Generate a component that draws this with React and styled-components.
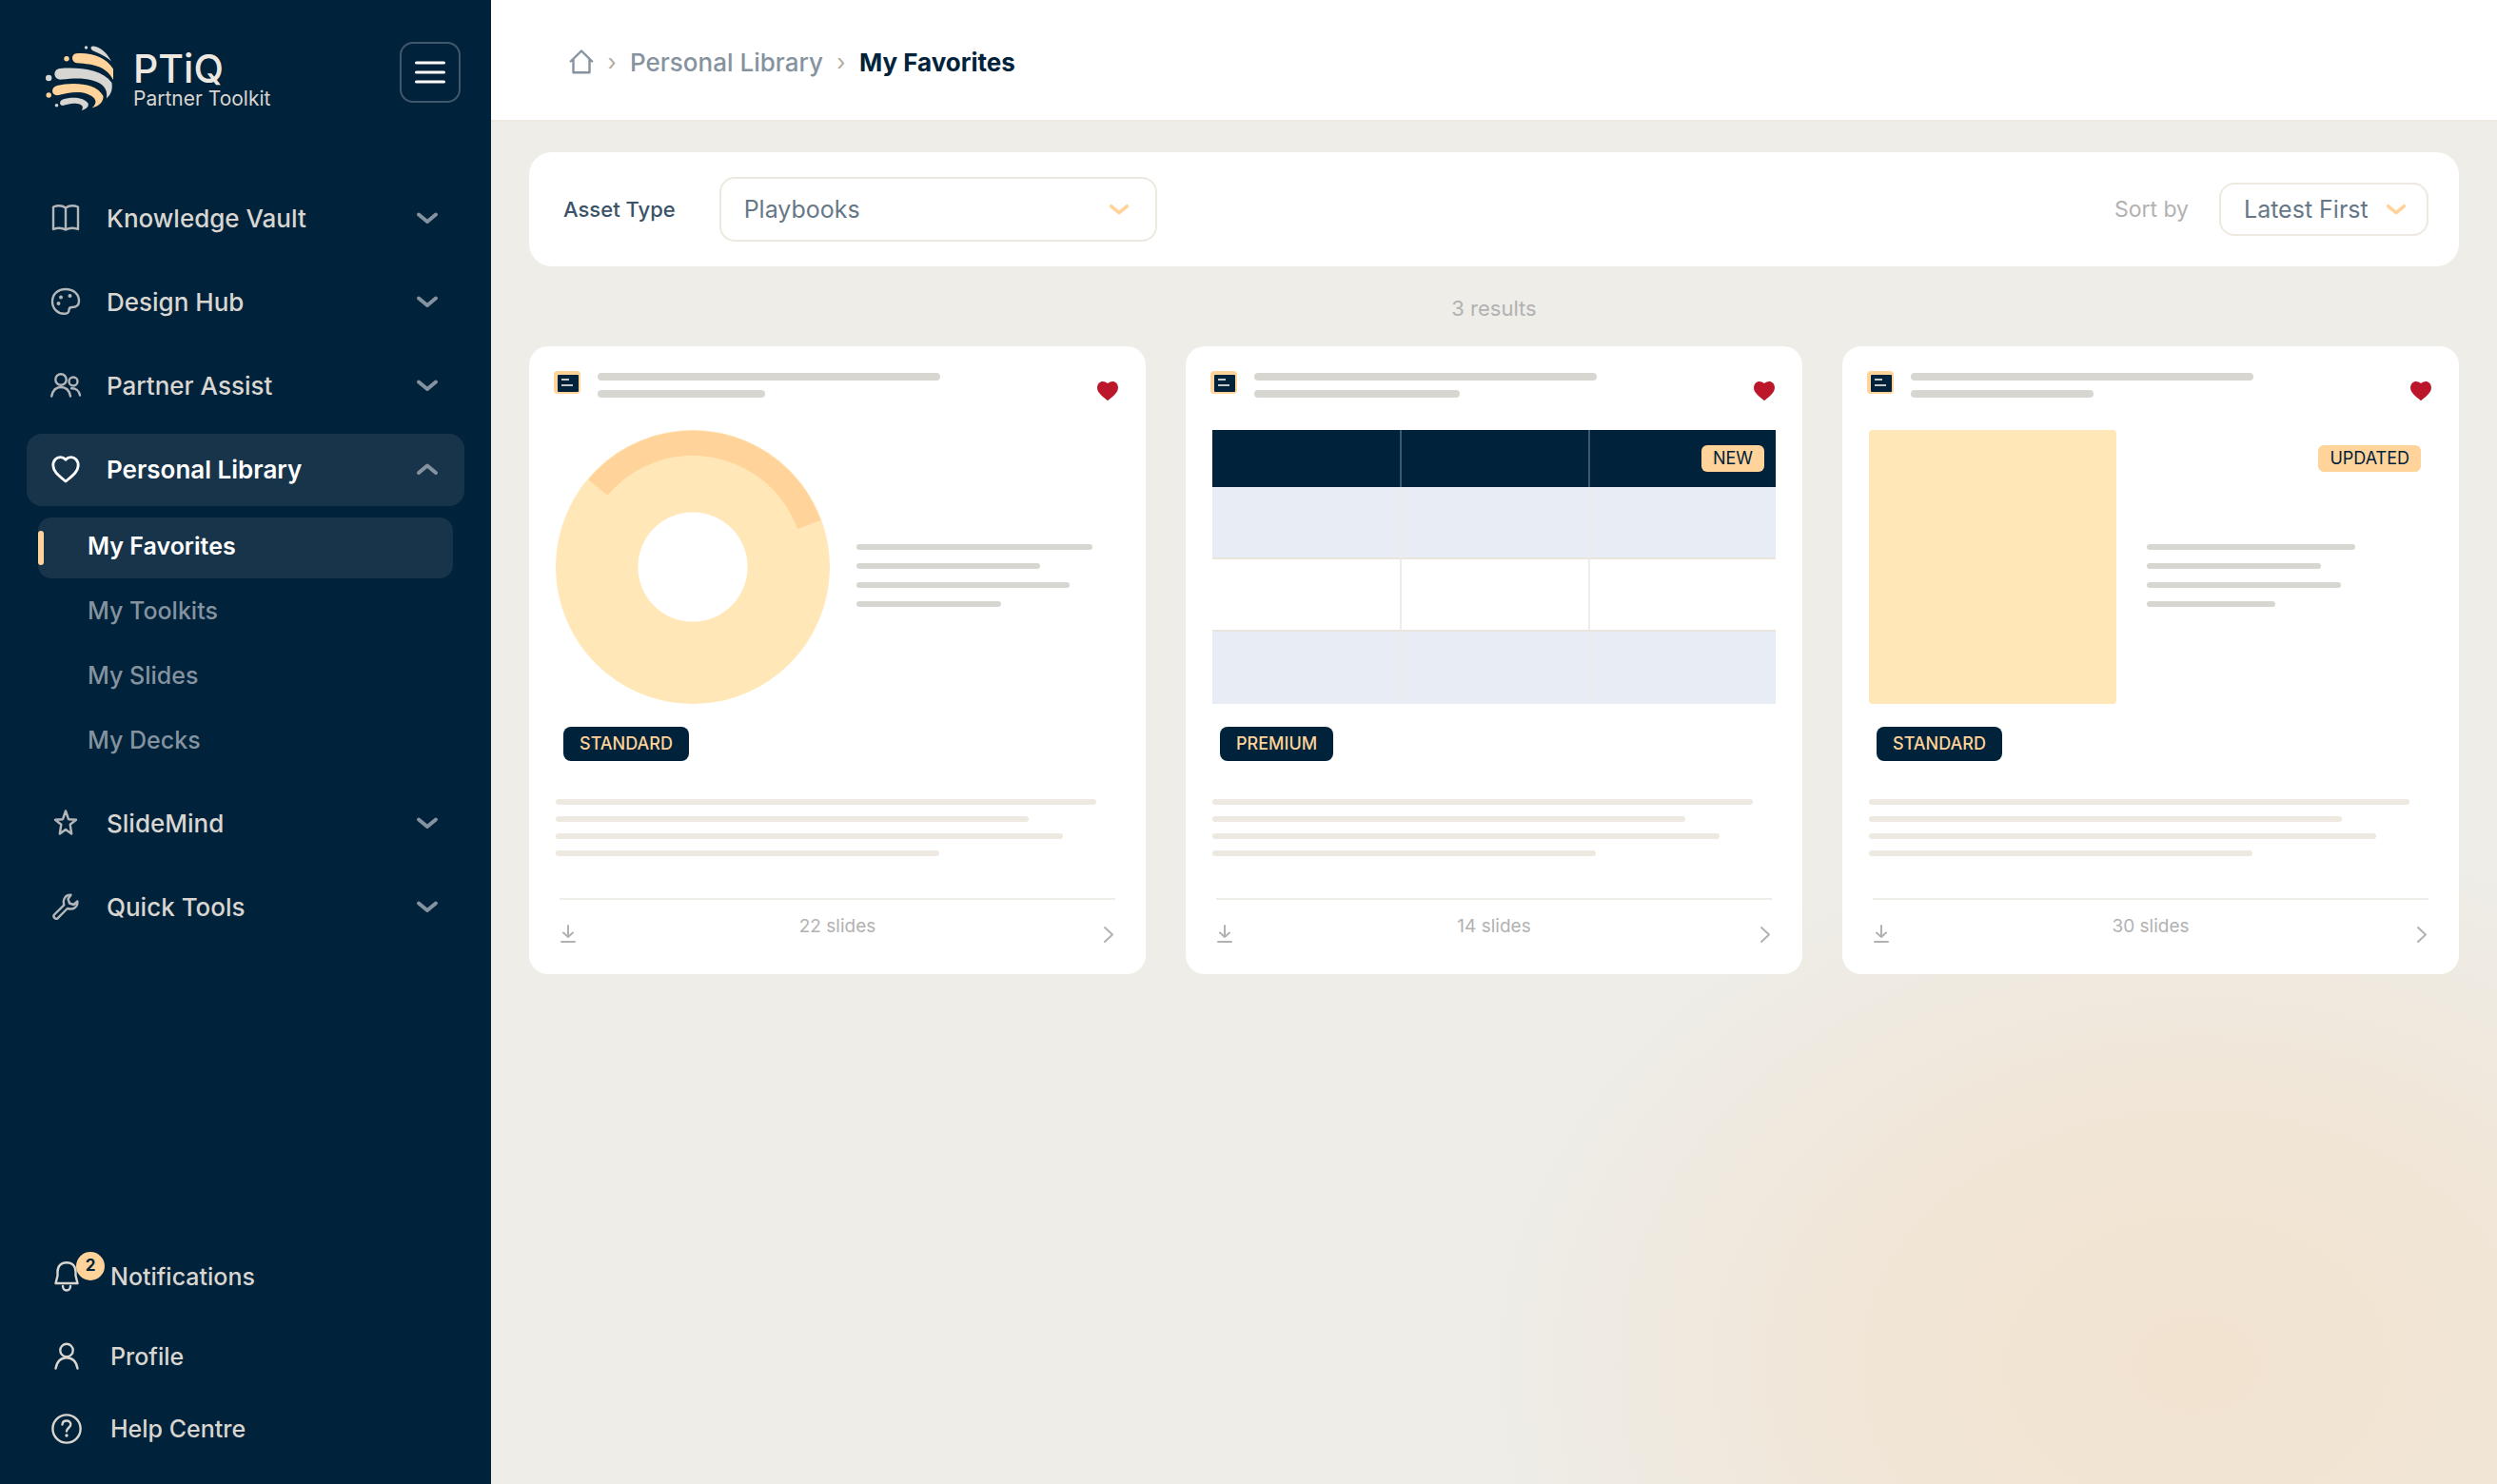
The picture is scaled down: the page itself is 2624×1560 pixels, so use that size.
import React, { useState } from 'react';
import styled, { createGlobalStyle } from 'styled-components';

const navy = '#00223a';
const peach = '#ffd399';
const cream = '#ffe7b7';
const sand = '#eeede8';
const line = '#eee9e0';
const bar = '#d7d6d1';

const GlobalStyle = createGlobalStyle`
  * {
    box-sizing: border-box;
  }

  body {
    margin: 0;
    background-color: ${sand};
    font-family: Inter, 'Open Sans', sans-serif;
    font-size: 24px;
    color: ${navy};
  }

  button, select {
    font: inherit;
    color: inherit;
    background: none;
    border: none;
    margin: 0;
    padding: 0;
    cursor: pointer;
  }

  a {
    color: inherit;
    text-decoration: none;
  }

  svg {
    display: block;
    flex-shrink: 0;
    fill: none;
    stroke: currentColor;
    stroke-linecap: round;
    stroke-linejoin: round;
  }
`;

const Page = styled.div`
  display: flex;
  min-height: 100vh;
`;

const Sidebar = styled.aside`
  display: flex;
  flex-direction: column;
  flex-shrink: 0;
  width: 516px;
  padding: 44px 28px 28px;
  background-color: ${navy};
  color: #d9d6d2;
`;

const SidebarHeader = styled.div`
  display: flex;
  justify-content: space-between;
  height: 148px;
  padding: 0 4px 0 20px;
`;

const Brand = styled.div`
  display: flex;
  gap: 18px;
  height: 76px;
`;

const BrandName = styled.div`
  padding-top: 6px;
  font-size: 41px;
  line-height: 44px;
  font-weight: 500;
  color: #eee9e0;
`;

const BrandTagline = styled.div`
  font-size: 21px;
  line-height: 20px;
  color: #d9d6d2;
`;

const MenuButton = styled.button`
  display: flex;
  align-items: center;
  justify-content: center;
  width: 64px;
  height: 64px;
  border: 2px solid #40586b;
  border-radius: 14px;
  color: #fff;
`;

const Nav = styled.nav`
  display: flex;
  flex-direction: column;
  gap: 12px;
`;

const NavButton = styled.button`
  display: flex;
  align-items: center;
  gap: 26px;
  width: 100%;
  height: 76px;
  padding: 0 27px 2px 24px;
  border-radius: 16px;
  background-color: ${(props) => (props.$active ? '#17344b' : 'transparent')};
  color: ${(props) => (props.$active ? '#fff' : '#d9d6d2')};
  font-size: 26px;
  font-weight: ${(props) => (props.$active ? 600 : 500)};
  text-align: left;
`;

const NavLabel = styled.span`
  flex: 1;
`;

const NavIcon = styled.span`
  color: ${(props) => (props.$active ? '#fff' : '#b3b7ba')};
`;

const NavChevron = styled.span`
  color: #8592a0;
`;

const SubNav = styled.div`
  display: flex;
  flex-direction: column;
  gap: 4px;
  padding: 12px 12px 4px;
`;

const SubLink = styled.a`
  display: flex;
  align-items: center;
  height: 64px;
  padding-bottom: 4px;
  border-radius: 14px;
  background-color: ${(props) => (props.$active ? '#17344b' : 'transparent')};
  color: ${(props) => (props.$active ? '#fff' : '#8592a0')};
  font-size: 25px;
  font-weight: ${(props) => (props.$active ? 600 : 500)};

  &::before {
    content: '';
    width: 6px;
    height: 36px;
    margin: 4px 46px 0 0;
    border-radius: 3px;
    background-color: ${(props) => (props.$active ? peach : 'transparent')};
  }
`;

const SidebarFooter = styled.div`
  display: flex;
  flex-direction: column;
  gap: 16px;
  margin-top: auto;
`;

const FooterLink = styled.a`
  display: flex;
  align-items: center;
  gap: 30px;
  height: ${(props) => (props.$tall ? 76 : 60)}px;
  padding: 0 26px;
  font-size: 25px;
  font-weight: 500;
`;

const FooterIcon = styled.span`
  position: relative;
`;

const CountBadge = styled.span`
  position: absolute;
  top: -8px;
  right: -24px;
  width: 30px;
  height: 30px;
  border-radius: 50%;
  background-color: ${peach};
  color: ${navy};
  font-size: 17px;
  line-height: 29px;
  font-weight: 700;
  text-align: center;
`;

const Main = styled.main`
  flex: 1;
  min-width: 0;
  background-image: radial-gradient(
    ellipse 36% 37% at 85% 92%,
    #f2e3d0 0%,
    rgba(242, 227, 208, 0.75) 45%,
    rgba(242, 227, 208, 0) 100%
  );
`;

const TopBar = styled.header`
  display: flex;
  align-items: center;
  gap: 16px;
  height: 128px;
  padding: 4px 80px 0 82px;
  border-bottom: 2px solid ${line};
  background-color: #fff;
  color: #8592a0;
`;

const Crumb = styled.a`
  color: ${(props) => (props.$current ? navy : '#8592a0')};
  font-size: 26px;
  font-weight: ${(props) => (props.$current ? 700 : 500)};
`;

const CrumbSeparator = styled.span`
  display: flex;
  justify-content: center;
  width: 6px;
  color: #b5aa9d;
  font-size: 24px;
`;

const Content = styled.div`
  padding: 32px 40px;
`;

const FilterBar = styled.section`
  display: flex;
  align-items: center;
  justify-content: space-between;
  height: 120px;
  padding: 0 32px 0 36px;
  border-radius: 24px;
  background-color: #fff;
`;

const Field = styled.div`
  display: flex;
  align-items: center;
  gap: ${(props) => props.$gap}px;
`;

const FieldLabel = styled.label`
  color: ${(props) => (props.$muted ? '#b2b2b2' : '#3a5368')};
  font-size: ${(props) => (props.$muted ? 23 : 22)}px;
  font-weight: ${(props) => (props.$muted ? 400 : 500)};
`;

const SelectWrap = styled.div`
  display: flex;
  align-items: center;
  position: relative;
  width: ${(props) => props.$width}px;
  height: ${(props) => props.$height}px;
  border: 2px solid ${line};
  border-radius: 16px;
  color: ${peach};

  svg {
    position: absolute;
    right: ${(props) => props.$arrow}px;
    pointer-events: none;
  }
`;

const Select = styled.select`
  width: 100%;
  height: 100%;
  padding: 0 24px;
  appearance: none;
  outline: none;
  color: #667888;
  font-size: 25px;
`;

const ResultCount = styled.p`
  margin: 0;
  height: 84px;
  line-height: 88px;
  text-align: center;
  color: #b2b2b2;
  font-size: 22px;
`;

const CardGrid = styled.div`
  display: grid;
  grid-template-columns: repeat(3, 1fr);
  gap: 42px;
`;

const Card = styled.article`
  position: relative;
  height: 660px;
  padding: 26px 28px;
  border-radius: 20px;
  background-color: #fff;
`;

const CardHeader = styled.div`
  display: flex;
  height: 62px;
`;

const DeckIcon = styled.span`
  width: 28px;
  height: 24px;
  margin: 0 18px 0 -2px;
`;

const TitleBars = styled.div`
  display: flex;
  flex: 0 1 400px;
  flex-direction: column;
  gap: 10px;
  padding-top: 2px;
`;

const TitleBar = styled.div`
  width: ${(props) => props.$width}%;
  height: 8px;
  border-radius: 4px;
  background-color: ${bar};
`;

const HeartButton = styled.button`
  display: flex;
  align-items: center;
  justify-content: center;
  width: 24px;
  height: 42px;
  margin-left: auto;
  color: #bb1629;
`;

const Preview = styled.div`
  display: flex;
  align-items: center;
  gap: ${(props) => props.$gap || 0}px;
  height: 288px;
`;

const CoverBlock = styled.div`
  flex-shrink: 0;
  width: 260px;
  height: 100%;
  border-radius: 4px;
  background-color: ${cream};
`;

const PreviewBars = styled.div`
  display: flex;
  flex: 1;
  flex-direction: column;
  gap: 14px;
  padding-top: 18px;
`;

const TextBar = styled.div`
  width: ${(props) => props.$width}%;
  height: 6px;
  border-radius: 3px;
  background-color: ${(props) => (props.$light ? line : bar)};
`;

const PreviewGrid = styled.div`
  display: grid;
  grid-template-columns: repeat(3, 1fr);
  grid-template-rows: 60px repeat(3, 76px);
  width: 100%;
`;

const GridCell = styled.div`
  background-color: ${(props) => (props.$head ? navy : props.$stripe ? '#e8edf5' : '#fff')};
  border-left: ${(props) => (props.$first ? 'none' : `2px solid ${props.$head ? '#40586b' : '#eeede8'}`)};
  border-bottom: ${(props) => (props.$ruled ? '2px solid #e9e5dc' : 'none')};
`;

const StatusTag = styled.span`
  position: absolute;
  top: 104px;
  right: 40px;
  height: 28px;
  padding: 0 12px;
  border-radius: 6px;
  background-color: ${peach};
  color: ${navy};
  font-size: 18px;
  line-height: 28px;
`;

const TierRow = styled.div`
  display: flex;
  padding: 24px 8px 40px;
`;

const TierBadge = styled.span`
  height: 36px;
  padding: 0 17px;
  border-radius: 8px;
  background-color: ${navy};
  color: ${peach};
  font-size: 18px;
  line-height: 36px;
  font-weight: 500;
`;

const Summary = styled.div`
  display: flex;
  flex-direction: column;
  gap: 12px;
`;

const CardFooter = styled.footer`
  display: flex;
  align-items: flex-start;
  justify-content: space-between;
  margin: 44px 4px 0;
  border-top: 2px solid ${sand};
  color: #b2b2b2;
`;

const IconButton = styled.button`
  width: 20px;
  margin-top: 24px;
`;

const SlideCount = styled.span`
  font-size: 19px;
  line-height: 56px;
`;

const NavSvg = ({ children }) => (
  <svg width="34" height="34" viewBox="0 0 34 34" strokeWidth="2.4">
    {children}
  </svg>
);

const Chevron = ({ up, width = 24, strokeWidth = 3 }) => (
  <svg width={width} height="24" viewBox="0 0 24 24" strokeWidth={strokeWidth}>
    <path d={up ? 'M3 16 L12 8.500 L21 16' : 'M3 8.500 L12 16 L21 8.500'} />
  </svg>
);

const Logo = () => (
  <svg width="74" height="76" viewBox="0 0 74 76">
    <g fill="#d7d6d3" stroke="none">
      <circle cx="42.500" cy="6" r="1.700" />
      <circle cx="3.200" cy="38" r="3.200" />
      <circle cx="11.500" cy="66.700" r="1.800" />
      <path d="M50 4.500 C57 5 65 12 69 20.500 C62 14 56 12.500 50 9.500 C46.500 7.500 47 4.300 50 4.500Z" />
      <path d="M15 28 C36 26.500 59 29 69.500 43 C70.500 51 68.500 55 64 59.500 C65.500 49 60 43.500 49 40.500 C38 37.500 28 38.500 17 39.600 C7.500 40.500 7 28.500 15 28Z" />
      <path d="M18 60.500 C26 58 39 57.500 44.500 64.500 C46 68 42.500 70.500 37.800 72 C40.500 68 38 65.600 33 65 C27 64.200 24 65.500 19 66.800 C14.500 68 13.500 62 18 60.500Z" />
    </g>
    <g fill={peach} stroke="none">
      <circle cx="22" cy="17.700" r="2.700" />
      <circle cx="3.200" cy="56" r="2.700" />
      <path d="M32 12.300 C48 11 63 16 71 28.500 L71 40 C64 26 51 23.500 33 22.300 C26.500 21.800 26.500 12.800 32 12.300Z" />
      <path d="M12 46 C26 42.500 53 42 60.500 57 C61 62 57 67.500 48.500 69.500 C55.500 64 53 58 43 54.500 C33 51.500 22 54 13.500 56 C6 57.500 4.500 48 12 46Z" />
    </g>
  </svg>
);

const BookIcon = () => (
  <NavSvg>
    <path d="M17 6.500 C13.500 4 8 4 4 5.500 V29 C8 27.500 13.500 27.500 17 29.500 C20.500 27.500 26 27.500 30 29 V5.500 C26 4 20.500 4 17 6.500Z M17 6.500 V29.500" />
  </NavSvg>
);

const PaletteIcon = () => (
  <NavSvg>
    <path d="M17 4 C8.500 4 3 9.500 3 17 C3 24.500 8.500 29.500 15 29.800 C18.500 30 20.500 28.500 20.500 26 C20.500 24 21 23 23.500 23 C28 23 31 21.500 31 16.500 C31 9 25 4 17 4Z" />
    <g fill="currentColor" stroke="none">
      <circle cx="9.500" cy="19" r="2" />
      <circle cx="12" cy="12.500" r="2" />
      <circle cx="21.500" cy="11" r="2" />
    </g>
  </NavSvg>
);

const UsersIcon = () => (
  <NavSvg>
    <circle cx="12" cy="11" r="5.700" />
    <circle cx="25" cy="13" r="4.500" />
    <path d="M2.200 28.500 C3.500 22 7 19 12 19 C17.500 19 20.800 22 22 28.500 M23 20.300 C27.500 19.800 31 22.500 32 27.500" />
  </NavSvg>
);

const HeartIcon = () => (
  <NavSvg>
    <path strokeWidth="2.800" d="M17 7.200 C14 4 9 3.800 6 7 C2.500 11 3.500 17 7 21 C10 24.500 14 27.500 17 30 C20 27.500 24 24.500 27 21 C30.500 17 31.500 11 28 7 C25 3.800 20 4 17 7.200Z" />
  </NavSvg>
);

const StarIcon = () => (
  <NavSvg>
    <path d="M17 4.500 L20 13.200 L28 13.700 L21.700 18.800 L23.200 28.500 L17 24 L10.800 28.500 L12.300 18.800 L6 13.700 L14 13.200Z" />
  </NavSvg>
);

const WrenchIcon = () => (
  <NavSvg>
    <path d="M22.500 4.800 C17 4.500 13.500 9 15.300 15.300 L5 25.500 C3.200 27.500 6.200 31.200 8.800 29.200 L18.800 19 C25 20.800 30 17.500 29.300 11.500 L25.500 15 L21 13.500 L19.500 9Z" />
  </NavSvg>
);

const BellIcon = () => (
  <svg width="32" height="36" viewBox="0 0 32 36" strokeWidth="2.400">
    <path d="M6.500 17 V13 C6.500 7 10 3.300 16 3.300 C22 3.300 25.500 7 25.500 13 V17 L27.500 25 H4.500Z M12 28 C12 34 20 34 20 28" />
  </svg>
);

const ProfileIcon = () => (
  <svg width="32" height="32" viewBox="0 0 32 32" strokeWidth="2.400">
    <circle cx="16" cy="9.500" r="6.700" />
    <path d="M4.500 28.500 C6 21 10 17.300 16 17.300 C22 17.300 26 21 27.500 28.500" />
  </svg>
);

const HelpIcon = () => (
  <svg width="32" height="32" viewBox="0 0 32 32" strokeWidth="2.400">
    <circle cx="16" cy="16" r="14.600" />
    <path d="M11.500 11.500 C12 6 20.500 6.500 20.300 11.500 C20.200 14.500 16.300 15 16 18.500" />
    <circle cx="16" cy="23" r="1.700" fill="currentColor" stroke="none" />
  </svg>
);

const HomeIcon = () => (
  <svg width="26" height="28" viewBox="0 0 26 28" strokeWidth="2.400">
    <path d="M1.800 13.500 L13 2.500 L24.200 13.500 M4.500 11.500 V25.200 H21.500 V11.500" />
  </svg>
);

const Donut = () => (
  <svg width="288" height="288" viewBox="0 0 288 288">
    <circle cx="144" cy="144" r="144" fill={cream} stroke="none" />
    <path d="M44.400 60.400 A130 130 0 0 1 266.200 99.500" stroke={peach} strokeWidth="26" strokeLinecap="butt" />
    <circle cx="144" cy="144" r="57.600" fill="#fff" stroke="none" />
  </svg>
);

const navItems = [
  { label: 'Knowledge Vault', icon: BookIcon },
  { label: 'Design Hub', icon: PaletteIcon },
  { label: 'Partner Assist', icon: UsersIcon },
  { label: 'Personal Library', icon: HeartIcon, children: ['My Favorites', 'My Toolkits', 'My Slides', 'My Decks'] },
  { label: 'SlideMind', icon: StarIcon },
  { label: 'Quick Tools', icon: WrenchIcon },
];

const cards = [
  { id: 1, kind: 'chart', title: [90, 44], tier: 'STANDARD', slides: 22 },
  { id: 2, kind: 'table', title: [90, 54], tier: 'PREMIUM', slides: 14, status: 'NEW' },
  { id: 3, kind: 'cover', title: [90, 48], tier: 'STANDARD', slides: 30, status: 'UPDATED' },
];

const CardPreview = ({ kind }) => {
  if (kind === 'table') {
    return (
      <Preview>
        <PreviewGrid>
          {[0, 1, 2, 3].map((row) =>
            [0, 1, 2].map((col) => (
              <GridCell
                key={`${row}-${col}`}
                $head={row === 0}
                $stripe={row % 2 === 1}
                $first={col === 0}
                $ruled={row === 1 || row === 2}
              />
            ))
          )}
        </PreviewGrid>
      </Preview>
    );
  }

  const widths = kind === 'chart' ? [90, 70, 81, 55] : [73, 61, 68, 45];
  return (
    <Preview $gap={kind === 'chart' ? 28 : 32}>
      {kind === 'chart' ? <Donut /> : <CoverBlock />}
      <PreviewBars>
        {widths.map((width) => (
          <TextBar key={width} $width={width} />
        ))}
      </PreviewBars>
    </Preview>
  );
};

const AssetCard = ({ card }) => (
  <Card>
    <CardHeader>
      <DeckIcon>
        <svg width="28" height="24" viewBox="0 0 28 24">
          <g stroke="none">
            <rect width="28" height="24" rx="4" fill={peach} />
            <rect x="4" y="4" width="22" height="18" rx="1" fill={navy} />
            <path d="M8 8 h8 v2 h-8z M8 14 h12 v2 h-12z" fill="#c6c8c8" />
          </g>
        </svg>
      </DeckIcon>
      <TitleBars>
        {card.title.map((width) => (
          <TitleBar key={width} $width={width} />
        ))}
      </TitleBars>
      <HeartButton aria-label="Remove from favorites">
        <svg width="24" height="22" viewBox="0 0 24 22">
          <path
            fill="currentColor"
            stroke="none"
            d="M12 3 C9 0.300 5 0.300 3 2.500 C0 6 0.700 10.500 3.500 13.500 C6 16.500 9.500 19 12 21.200 C14.500 19 18 16.500 20.500 13.500 C23.300 10.500 24 6 21 2.500 C19 0.300 15 0.300 12 3Z"
          />
        </svg>
      </HeartButton>
    </CardHeader>
    <CardPreview kind={card.kind} />
    {card.status && <StatusTag>{card.status}</StatusTag>}
    <TierRow>
      <TierBadge>{card.tier}</TierBadge>
    </TierRow>
    <Summary>
      {[96, 84, 90, 68].map((width) => (
        <TextBar key={width} $width={width} $light />
      ))}
    </Summary>
    <CardFooter>
      <IconButton aria-label="Download">
        <svg width="18" height="22" viewBox="0 0 18 22" strokeWidth="2">
          <path d="M9 3 V15 M4 10.500 L9 15 L14 10.500 M2 20 H16" />
        </svg>
      </IconButton>
      <SlideCount>{card.slides} slides</SlideCount>
      <IconButton aria-label="Open">
        <svg width="20" height="22" viewBox="0 0 20 22" strokeWidth="2">
          <path d="M9 5 L17 12.500 L9 20" />
        </svg>
      </IconButton>
    </CardFooter>
  </Card>
);

const App = () => {
  const [openMenu, setOpenMenu] = useState('Personal Library');
  const [assetType, setAssetType] = useState('Playbooks');
  const [sortBy, setSortBy] = useState('Latest First');

  return (
    <>
      <GlobalStyle />
      <Page>
        <Sidebar>
          <SidebarHeader>
            <Brand>
              <Logo />
              <div>
                <BrandName>PTiQ</BrandName>
                <BrandTagline>Partner Toolkit</BrandTagline>
              </div>
            </Brand>
            <MenuButton aria-label="Toggle menu">
              <svg width="34" height="26" viewBox="0 0 34 26" strokeWidth="3">
                <path d="M2.500 3 H31.500 M2.500 13 H31.500 M2.500 23 H31.500" />
              </svg>
            </MenuButton>
          </SidebarHeader>

          <Nav>
            {navItems.map((item) => {
              const Icon = item.icon;
              const active = item.label === openMenu;
              return (
                <div key={item.label}>
                  <NavButton $active={active} onClick={() => setOpenMenu(active ? '' : item.label)}>
                    <NavIcon $active={active}>
                      <Icon />
                    </NavIcon>
                    <NavLabel>{item.label}</NavLabel>
                    <NavChevron>
                      <Chevron up={active} strokeWidth={4} />
                    </NavChevron>
                  </NavButton>
                  {active && item.children && (
                    <SubNav>
                      {item.children.map((child, index) => (
                        <SubLink key={child} href="#" $active={index === 0}>
                          {child}
                        </SubLink>
                      ))}
                    </SubNav>
                  )}
                </div>
              );
            })}
          </Nav>

          <SidebarFooter>
            <FooterLink href="#" $tall>
              <FooterIcon>
                <BellIcon />
                <CountBadge>2</CountBadge>
              </FooterIcon>
              Notifications
            </FooterLink>
            <FooterLink href="#">
              <FooterIcon>
                <ProfileIcon />
              </FooterIcon>
              Profile
            </FooterLink>
            <FooterLink href="#">
              <FooterIcon>
                <HelpIcon />
              </FooterIcon>
              Help Centre
            </FooterLink>
          </SidebarFooter>
        </Sidebar>

        <Main>
          <TopBar>
            <a href="#" aria-label="Home">
              <HomeIcon />
            </a>
            <CrumbSeparator>›</CrumbSeparator>
            <Crumb href="#">Personal Library</Crumb>
            <CrumbSeparator>›</CrumbSeparator>
            <Crumb href="#" $current>
              My Favorites
            </Crumb>
          </TopBar>

          <Content>
            <FilterBar>
              <Field $gap={46}>
                <FieldLabel htmlFor="asset-type">Asset Type</FieldLabel>
                <SelectWrap $width={460} $height={68} $arrow={27}>
                  <Select id="asset-type" value={assetType} onChange={(e) => setAssetType(e.target.value)}>
                    <option>Playbooks</option>
                  </Select>
                  <Chevron width={22} strokeWidth={4} />
                </SelectWrap>
              </Field>
              <Field $gap={32}>
                <FieldLabel htmlFor="sort-by" $muted>
                  Sort by
                </FieldLabel>
                <SelectWrap $width={220} $height={56} $arrow={21}>
                  <Select id="sort-by" value={sortBy} onChange={(e) => setSortBy(e.target.value)}>
                    <option>Latest First</option>
                  </Select>
                  <Chevron width={22} strokeWidth={4} />
                </SelectWrap>
              </Field>
            </FilterBar>

            <ResultCount>{cards.length} results</ResultCount>

            <CardGrid>
              {cards.map((card) => (
                <AssetCard key={card.id} card={card} />
              ))}
            </CardGrid>
          </Content>
        </Main>
      </Page>
    </>
  );
};

export default App;
